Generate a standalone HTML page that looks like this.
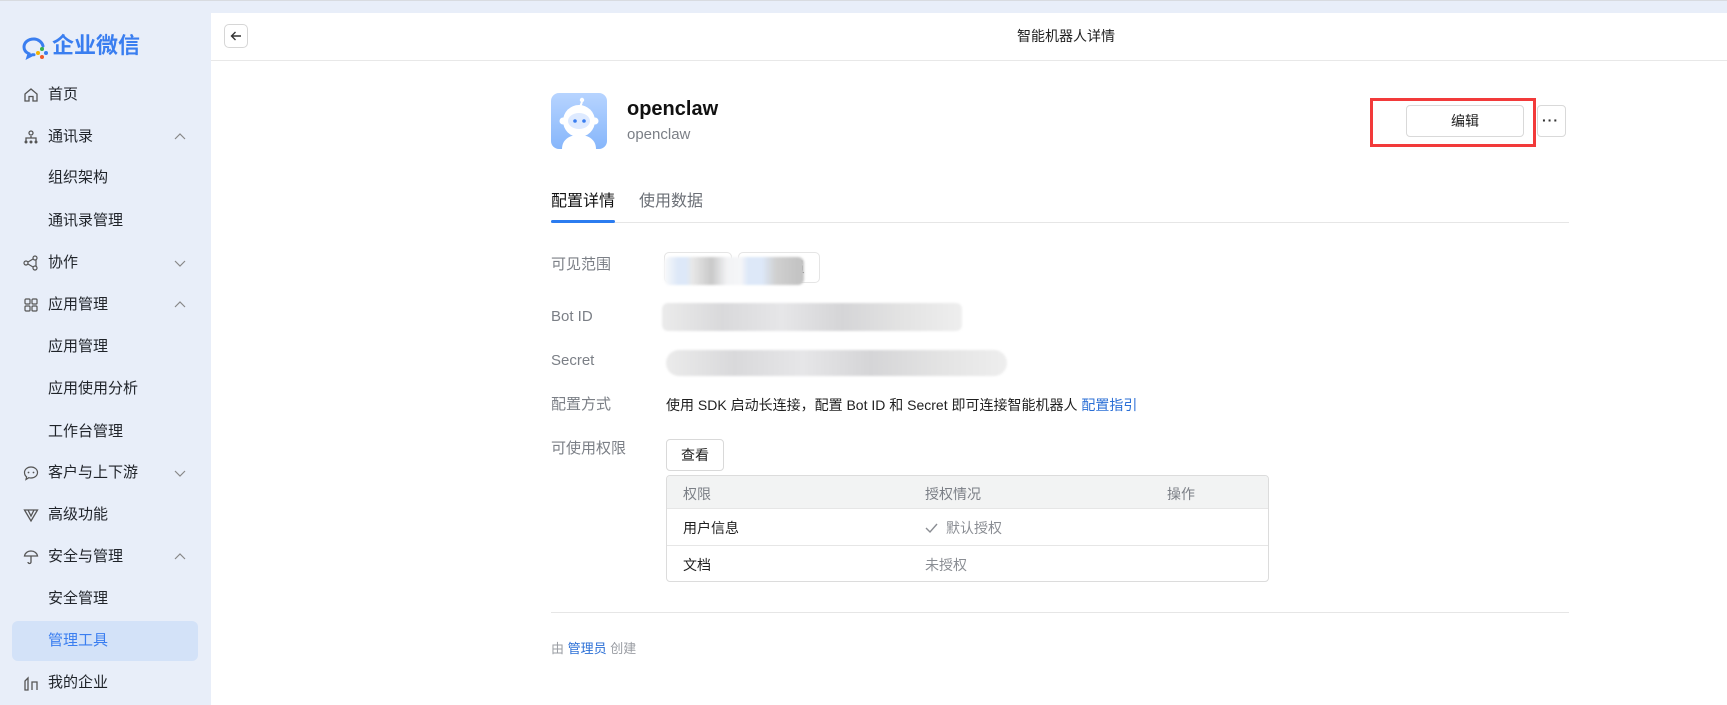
<!DOCTYPE html>
<html><head><meta charset="utf-8"><style>
*{margin:0;padding:0;box-sizing:border-box}
body{width:1727px;height:705px;overflow:hidden;background:#e8eef9;font-family:"Liberation Sans","Noto Sans CJK SC",sans-serif;position:relative;color:#1f1f1f}
.a{position:absolute;white-space:nowrap}
.nav{left:48px;font-size:15px;color:#1f2329;line-height:20px}
.ic{left:23px;width:16px;height:16px}
.chev{left:174px;width:12px;height:12px}
.panel{left:211px;top:13px;width:1516px;height:692px;background:#fff}
.lbl{left:551px;font-size:15px;color:#7b7f86;line-height:20px}
.blur{background:linear-gradient(90deg,#ebebeb,#d9d9db 20%,#e6e6e8 40%,#d5d5d7 60%,#e3e3e3 80%,#eeeeee);border-radius:6px;filter:blur(1px)}
</style></head><body>
<div class="a" style="left:0;top:0;width:1727px;height:1px;background:#d8dbe0"></div>
<svg class="a" style="left:22px;top:36px" width="28" height="24" viewBox="0 0 28 24"><path d="M12 3C6 3 2 6.5 2 11c0 3 2 5.5 5 6.8L6 21l4.5-2.3c.5 0 1 .1 1.5.1" fill="none" stroke="#3a7ef0" stroke-width="3" stroke-linecap="round"/><path d="M21 10c-1-4-5-7-9-7" fill="none" stroke="#3a7ef0" stroke-width="3" stroke-linecap="round"/><circle cx="20" cy="13" r="2" fill="#37b24d"/><circle cx="16" cy="17" r="2" fill="#f5b400"/><circle cx="24" cy="17" r="2" fill="#3a7ef0"/><circle cx="20" cy="21" r="2" fill="#f05a28"/></svg>
<div class="a" style="left:52px;top:32px;font-size:22px;font-weight:bold;color:#3a7ef0;line-height:28px">企业微信</div>

<svg class="a ic" style="top:87px" viewBox="0 0 16 16"><path d="M2 7L8 2l6 5v7H10V9.5H6V14H2z" fill="none" stroke="#555" stroke-width="1.3"/></svg>
<div class="a nav" style="top:85px">首页</div>
<svg class="a ic" style="top:129px" viewBox="0 0 16 16"><circle cx="8" cy="4" r="2" fill="none" stroke="#555" stroke-width="1.3"/><path d="M3 12v-3h10v3M8 7v2" fill="none" stroke="#555" stroke-width="1.3"/><circle cx="3" cy="13" r="1.5" fill="#555"/><circle cx="8" cy="13" r="1.5" fill="#555"/><circle cx="13" cy="13" r="1.5" fill="#555"/></svg>
<div class="a nav" style="top:127px">通讯录</div>
<svg class="a chev" style="top:131px" viewBox="0 0 12 12"><path d="M1 8l5-5 5 5" fill="none" stroke="#888" stroke-width="1.2"/></svg>
<div class="a nav" style="top:168px">组织架构</div>
<div class="a nav" style="top:211px">通讯录管理</div>
<svg class="a ic" style="top:255px" viewBox="0 0 16 16"><circle cx="3" cy="8" r="2" fill="none" stroke="#555" stroke-width="1.2"/><circle cx="12" cy="3" r="2" fill="none" stroke="#555" stroke-width="1.2"/><circle cx="12" cy="13" r="2" fill="none" stroke="#555" stroke-width="1.2"/><path d="M5 7l5-3M5 9l5 3M13 5v6" fill="none" stroke="#555" stroke-width="1.2"/></svg>
<div class="a nav" style="top:253px">协作</div>
<svg class="a chev" style="top:257px" viewBox="0 0 12 12"><path d="M1 4l5 5 5-5" fill="none" stroke="#888" stroke-width="1.2"/></svg>
<svg class="a ic" style="top:297px" viewBox="0 0 16 16"><rect x="2" y="2" width="5" height="5" rx="1" fill="none" stroke="#555" stroke-width="1.2"/><rect x="9" y="2" width="5" height="5" rx="1" fill="none" stroke="#555" stroke-width="1.2"/><rect x="2" y="9" width="5" height="5" rx="1" fill="none" stroke="#555" stroke-width="1.2"/><rect x="9" y="9" width="5" height="5" rx="1" fill="none" stroke="#555" stroke-width="1.2"/></svg>
<div class="a nav" style="top:295px">应用管理</div>
<svg class="a chev" style="top:299px" viewBox="0 0 12 12"><path d="M1 8l5-5 5 5" fill="none" stroke="#888" stroke-width="1.2"/></svg>
<div class="a nav" style="top:337px">应用管理</div>
<div class="a nav" style="top:379px">应用使用分析</div>
<div class="a nav" style="top:422px">工作台管理</div>
<svg class="a ic" style="top:465px" viewBox="0 0 16 16"><path d="M8 2c3.6 0 6.5 2.4 6.5 5.5S11.6 13 8 13c-.8 0-1.5-.1-2.2-.3L3 14.5l.6-2.6C2.3 10.9 1.5 9.3 1.5 7.5 1.5 4.4 4.4 2 8 2z" fill="none" stroke="#555" stroke-width="1.2"/><circle cx="5.5" cy="7.5" r=".9" fill="#555"/><circle cx="10.5" cy="7.5" r=".9" fill="#555"/></svg>
<div class="a nav" style="top:463px">客户与上下游</div>
<svg class="a chev" style="top:467px" viewBox="0 0 12 12"><path d="M1 4l5 5 5-5" fill="none" stroke="#888" stroke-width="1.2"/></svg>
<svg class="a ic" style="top:507px" viewBox="0 0 16 16"><path d="M1.5 3h13L8 14zM5 3l3 6 3-6" fill="none" stroke="#555" stroke-width="1.3"/></svg>
<div class="a nav" style="top:505px">高级功能</div>
<svg class="a ic" style="top:549px" viewBox="0 0 16 16"><path d="M1.5 7C2 4 4.7 2 8 2s6 2 6.5 5zM8 7v6a1.5 1.5 0 01-3 0" fill="none" stroke="#555" stroke-width="1.3"/></svg>
<div class="a nav" style="top:547px">安全与管理</div>
<svg class="a chev" style="top:551px" viewBox="0 0 12 12"><path d="M1 8l5-5 5 5" fill="none" stroke="#888" stroke-width="1.2"/></svg>
<div class="a nav" style="top:589px">安全管理</div>
<div class="a" style="left:12px;top:621px;width:186px;height:40px;background:#d3e2f8;border-radius:6px"></div>
<div class="a nav" style="top:631px;color:#3a7ef0">管理工具</div>
<svg class="a ic" style="top:675px" viewBox="0 0 16 16"><path d="M2 15V6l3-3v12zM9 15V7h5v8" fill="none" stroke="#555" stroke-width="1.3"/></svg>
<div class="a nav" style="top:673px">我的企业</div>

<div class="a panel"></div>
<div class="a" style="left:211px;top:60px;width:1516px;height:1px;background:#e8e8e8"></div>
<div class="a" style="left:224px;top:24px;width:24px;height:24px;border:1px solid #d6d6d6;border-radius:5px"></div>
<svg class="a" style="left:229px;top:29px" width="14" height="14" viewBox="0 0 14 14"><path d="M12 7H2.5M6.5 3L2.5 7l4 4" fill="none" stroke="#333" stroke-width="1.4"/></svg>
<div class="a" style="left:966px;width:200px;top:26px;text-align:center;font-size:14px;line-height:20px;color:#1f1f1f">智能机器人详情</div>

<svg class="a" style="left:551px;top:93px" width="56" height="56" viewBox="0 0 56 56"><defs><linearGradient id="g" x1="0" y1="0" x2="0" y2="1"><stop offset="0" stop-color="#b7d4ff"/><stop offset="1" stop-color="#86b6fb"/></linearGradient></defs><rect width="56" height="56" rx="8" fill="url(#g)"/><path d="M11 56c0-9 7-14 17-14s17 5 17 14z" fill="#fff"/><line x1="31" y1="9" x2="29" y2="14" stroke="#fff" stroke-width="2"/><circle cx="31" cy="7" r="2.2" fill="#fff"/><circle cx="28" cy="28" r="16" fill="#fff"/><circle cx="12" cy="28" r="3.5" fill="#fff"/><circle cx="44" cy="28" r="3.5" fill="#fff"/><ellipse cx="28" cy="28" rx="11" ry="8" fill="#deeaff"/><circle cx="24" cy="28" r="1.8" fill="#3a7ef0"/><circle cx="33" cy="28" r="1.8" fill="#3a7ef0"/></svg>
<div class="a" style="left:627px;top:97px;font-size:20px;font-weight:bold;line-height:24px;color:#111">openclaw</div>
<div class="a" style="left:627px;top:125px;font-size:15px;line-height:20px;color:#7b7f86">openclaw</div>

<div class="a" style="left:1370px;top:98px;width:166px;height:49px;border:3px solid #f23a3a"></div>
<div class="a" style="left:1406px;top:105px;width:118px;height:32px;border:1px solid #d9d9d9;border-radius:4px;font-size:14px;text-align:center;line-height:30px;color:#1f1f1f">编辑</div>
<div class="a" style="left:1537px;top:105px;width:29px;height:32px;border:1px solid #d9d9d9;border-radius:4px"></div>
<div class="a" style="left:1542px;top:110px;font-size:14px;letter-spacing:1px;color:#333;line-height:20px;font-weight:bold">···</div>

<div class="a" style="left:551px;top:191px;font-size:16px;line-height:22px;color:#111">配置详情</div>
<div class="a" style="left:639px;top:191px;font-size:16px;line-height:22px;color:#6b6f76">使用数据</div>
<div class="a" style="left:551px;top:222px;width:1018px;height:1px;background:#e6e6e6"></div>
<div class="a" style="left:551px;top:220px;width:64px;height:3px;background:#2b7cf0;border-radius:2px"></div>

<div class="a lbl" style="top:255px">可见范围</div>
<div class="a" style="left:664px;top:252px;width:68px;height:31px;border:1px solid #e5e5e5;border-radius:5px"></div>
<div class="a" style="left:738px;top:252px;width:82px;height:31px;border:1px solid #e5e5e5;border-radius:5px;font-size:14px;line-height:29px;padding-left:52px">员</div>
<div class="a blur" style="left:664px;top:257px;width:140px;height:28px;background:linear-gradient(90deg,#fafafa,#dde8f8 10%,#dde8f8 16%,#e8e8e8 20%,#c9c9c9 34%,#f2f3f5 45%,#f5f6f8 55%,#dde8f8 60%,#dde8f8 70%,#d0d0d0 80%,#c4c4c4 95%)"></div>
<div class="a lbl" style="top:307px">Bot ID</div>
<div class="a blur" style="left:662px;top:303px;width:300px;height:28px"></div>
<div class="a lbl" style="top:351px">Secret</div>
<div class="a blur" style="left:666px;top:350px;width:341px;height:26px;border-radius:13px"></div>
<div class="a lbl" style="top:395px">配置方式</div>
<div class="a" style="left:666px;top:395px;font-size:14px;line-height:20px;color:#1f1f1f">使用 SDK 启动长连接，配置 Bot ID 和 Secret 即可连接智能机器人 <span style="color:#2b6fd6">配置指引</span></div>
<div class="a lbl" style="top:439px">可使用权限</div>
<div class="a" style="left:666px;top:439px;width:58px;height:32px;border:1px solid #d9d9d9;border-radius:4px;font-size:14px;text-align:center;line-height:30px">查看</div>
<div class="a" style="left:666px;top:475px;width:603px;height:107px;border:1px solid #dcdcdc;border-radius:4px;overflow:hidden">
<div style="height:33px;background:#f2f3f3;border-bottom:1px solid #e6e6e6"></div>
<div style="height:37px;border-bottom:1px solid #e6e6e6"></div>
</div>
<div class="a" style="left:683px;top:484px;font-size:14px;line-height:20px;color:#7b7f86">权限</div>
<div class="a" style="left:925px;top:484px;font-size:14px;line-height:20px;color:#7b7f86">授权情况</div>
<div class="a" style="left:1167px;top:484px;font-size:14px;line-height:20px;color:#7b7f86">操作</div>
<div class="a" style="left:683px;top:518px;font-size:14px;line-height:20px">用户信息</div>
<svg class="a" style="left:925px;top:522px" width="13" height="12" viewBox="0 0 13 12"><path d="M1 6l4 4 7-8" fill="none" stroke="#8a8d93" stroke-width="1.4"/></svg>
<div class="a" style="left:946px;top:518px;font-size:14px;line-height:20px;color:#8a8d93">默认授权</div>
<div class="a" style="left:683px;top:555px;font-size:14px;line-height:20px">文档</div>
<div class="a" style="left:925px;top:555px;font-size:14px;line-height:20px;color:#8a8d93">未授权</div>

<div class="a" style="left:551px;top:612px;width:1018px;height:1px;background:#e6e6e6"></div>
<div class="a" style="left:551px;top:639px;font-size:13px;line-height:20px;color:#9a9da3">由 <span style="color:#2b6fd6">管理员</span> 创建</div>
</body></html>
